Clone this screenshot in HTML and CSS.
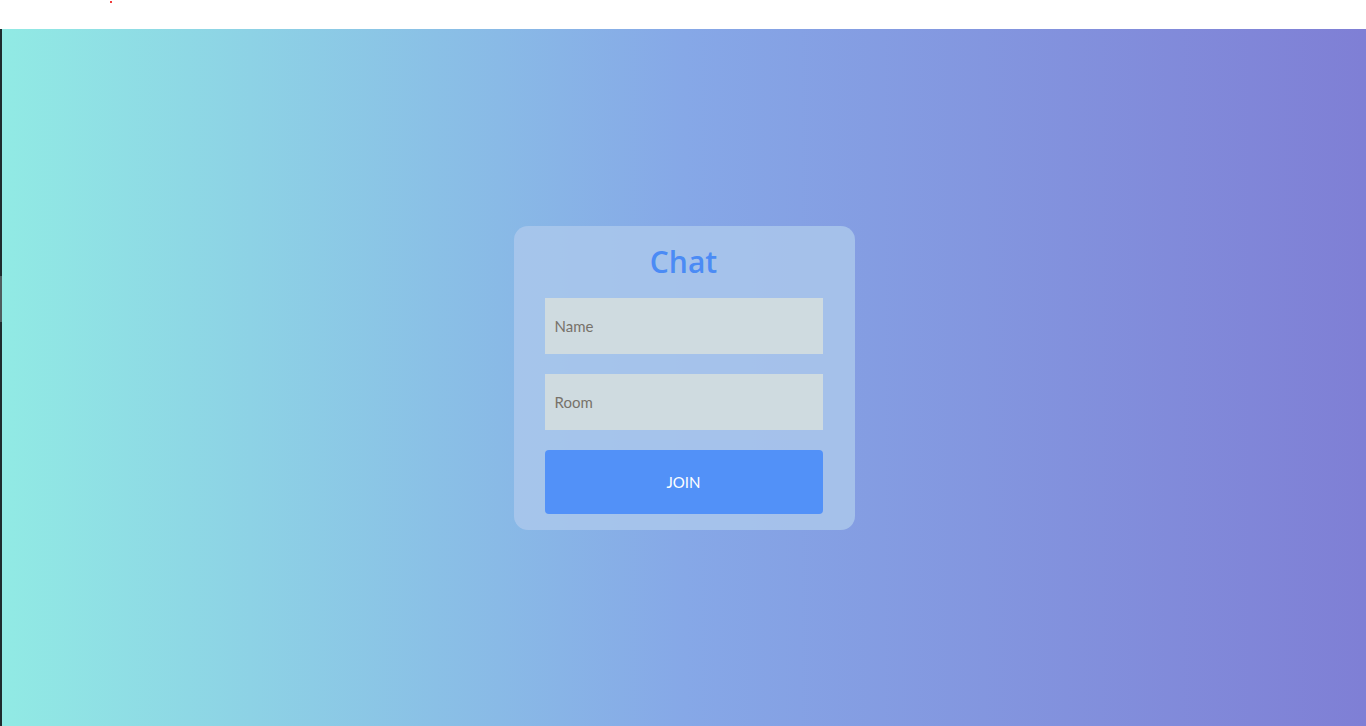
FILE: index.html
```html
<!DOCTYPE html>
<html>
<head>
<meta charset="utf-8">
<link rel="stylesheet" href="styles.css">
</head>
<body>
<div class="topbar"><span class="dot"></span></div>
<div class="app">
  <div class="edge"><span class="edge-mark"></span></div>
  <main class="stage">
    <form class="card">
      <h1 class="title">Chat</h1>
      <input class="field" type="text" placeholder="Name">
      <input class="field" type="text" placeholder="Room">
      <button class="join" type="button">JOIN</button>
    </form>
  </main>
</div>
</body>
</html>
```
FILE: styles.css
```css
* { box-sizing: border-box; }
html, body { margin: 0; padding: 0; }
body {
  font-family: Lato, "Open Sans", "Liberation Sans", sans-serif;
  background: #ffffff;
  width: 1366px;
  height: 726px;
  overflow: hidden;
}
.topbar {
  height: 29px;
  background: #ffffff;
  position: relative;
}
.dot {
  position: absolute;
  left: 110px;
  top: 1px;
  width: 2px;
  height: 2px;
  background: #f03c3c;
}
.app {
  display: flex;
  height: 697px;
}
.edge {
  width: 2px;
  background: #1f2b2e;
  position: relative;
}
.edge-mark {
  position: absolute;
  left: 0;
  top: 247px;
  width: 2px;
  height: 46px;
  background: #4f5c5e;
}
.stage {
  flex: 1;
  display: flex;
  align-items: center;
  justify-content: center;
  background: linear-gradient(to right, #91eae4, #86a8e7, #7f7fd5);
}
.card {
  width: 341px;
  padding: 16px 32px 16px 31px;
  border-radius: 14px;
  background: rgba(172, 200, 236, 0.82);
  display: flex;
  flex-direction: column;
  gap: 20px;
  margin: 0;
}
.title {
  margin: 0 0 -4px 0;
  text-align: center;
  font-family: "Open Sans", Lato, sans-serif;
  font-weight: 600;
  font-size: 30px;
  line-height: 40px;
  color: #4b8bf5;
}
.field {
  width: 100%;
  height: 56px;
  border: none;
  outline: none;
  background: #cfdbe0;
  padding: 0 10px;
  font-family: Lato, "Open Sans", sans-serif;
  font-size: 15px;
  color: #333;
}
.field::placeholder { color: #77726a; }
.join {
  width: 100%;
  height: 64px;
  border: none;
  border-radius: 4px;
  background: #5291f8;
  color: #ffffff;
  font-family: Lato, "Open Sans", sans-serif;
  font-size: 15px;
  cursor: pointer;
}
```
